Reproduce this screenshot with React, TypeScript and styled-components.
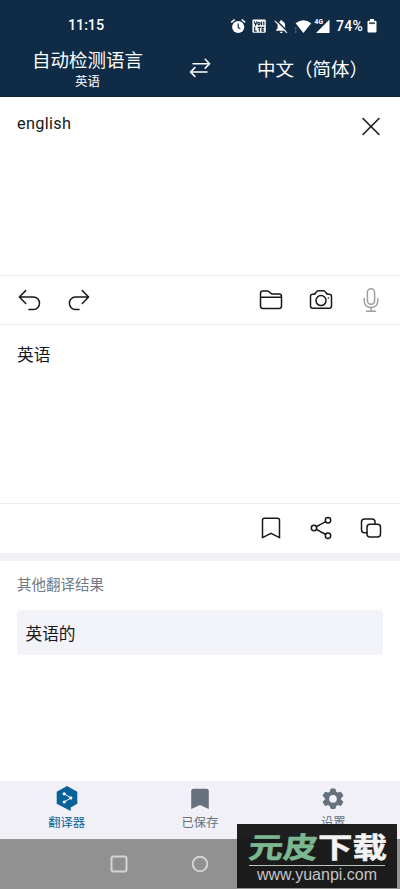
import React from 'react';
import styled, { createGlobalStyle } from 'styled-components';

const Global = createGlobalStyle`
  * { box-sizing: border-box; }
  body { margin: 0; background: #fff; }
`;

const Screen = styled.div`
  position: relative;
  width: 400px;
  height: 889px;
  display: flex;
  flex-direction: column;
  overflow: hidden;
  background: #fff;
  color: #15181c;
  font-family: Roboto, 'Noto Sans CJK SC', sans-serif;
`;

const Header = styled.header`
  height: 97px;
  flex: none;
  background: #102b46;
  color: #fff;
  border-bottom: 1px solid #0b2238;
`;

const StatusBar = styled.div`
  height: 44px;
  padding: 7px 23px 0 68px;
  display: flex;
  align-items: center;
  justify-content: space-between;
`;

const Clock = styled.span`
  font-size: 14.4px;
  font-weight: 500;
  line-height: 20px;
  letter-spacing: -0.1px;
`;

const StatusIcons = styled.div`
  display: flex;
  align-items: center;
`;

const Battery = styled.span`
  font-size: 14px;
  font-weight: 500;
  line-height: 20px;
  letter-spacing: 0.25px;
  margin: 0 4px 0 6px;
`;

const Languages = styled.div`
  display: grid;
  grid-template-columns: 175px 50px 175px;
  height: 52px;
`;

const Language = styled.button<{ $pad: number }>`
  border: 0;
  background: none;
  color: inherit;
  font: inherit;
  padding: ${(p) => p.$pad}px 0 0;
  display: flex;
  flex-direction: column;
  align-items: center;
  white-space: nowrap;
`;

const LanguageName = styled.span`
  font-size: 18.5px;
  line-height: 26px;
`;

const Detected = styled.span`
  font-size: 12.5px;
  line-height: 16px;
`;

const SwapButton = styled.div`
  display: flex;
  justify-content: center;
  padding-top: 12px;
`;

const TextPanel = styled.section`
  height: 178px;
  flex: none;
  display: flex;
  justify-content: space-between;
  align-items: flex-start;
  padding: 16px 18px 0 17px;
`;

const PanelText = styled.p<{ $cjk?: boolean }>`
  margin: ${(p) => (p.$cjk ? '4px' : '0')} 0 0;
  font-size: ${(p) => (p.$cjk ? '16.7px' : '16.3px')};
  line-height: 22px;
  letter-spacing: ${(p) => (p.$cjk ? '0' : '0.3px')};
`;

const CloseIcon = styled.svg`
  margin-top: 3px;
`;

const Toolbar = styled.div<{ $bottom?: boolean }>`
  height: 50px;
  flex: none;
  display: flex;
  align-items: center;
  gap: 26px;
  padding: ${(p) => (p.$bottom ? '0 17px' : '0 17px 1px')};
  border-top: 1px solid #eeeef0;
  border-bottom: ${(p) => (p.$bottom ? '1px solid #eeeef0' : '0')};
`;

const Spacer = styled.div`
  flex: 1;
`;

const Line = styled.svg`
  display: block;
  flex: none;
  fill: none;
  stroke: currentColor;
  stroke-width: 1.5;
  stroke-linecap: round;
  stroke-linejoin: round;
`;

const MicIcon = styled(Line)`
  color: #9b9ea2;
`;

const Divider = styled.div`
  height: 8px;
  flex: none;
  background: #f0f0f6;
`;

const Alternatives = styled.section`
  flex: 1;
  padding: 14px 17px 0;
`;

const SectionTitle = styled.h2`
  margin: 0;
  color: #717a83;
  font-size: 14.5px;
  font-weight: 400;
  line-height: 22px;
`;

const Result = styled.div`
  height: 45px;
  margin-top: 13px;
  padding: 0 8.5px;
  display: flex;
  align-items: center;
  border-radius: 4px;
  background: #f2f3f8;
  font-size: 16.7px;
`;

const Tabs = styled.nav`
  height: 58px;
  flex: none;
  display: grid;
  grid-template-columns: repeat(3, 1fr);
  background: #f0f0f6;
`;

const Tab = styled.div<{ $active?: boolean }>`
  display: flex;
  flex-direction: column;
  align-items: center;
  padding-top: 4px;
  color: ${(p) => (p.$active ? '#08629a' : '#66717d')};
  font-size: 12.3px;
  line-height: 16px;
`;

const TabIcon = styled.svg`
  display: block;
  margin-bottom: 4px;
`;

const SystemBar = styled.div`
  height: 50px;
  flex: none;
  background: #919191;
  display: flex;
  align-items: center;
  padding-left: 110px;
  gap: 63px;
`;

const Watermark = styled.div`
  position: absolute;
  left: 237px;
  top: 824px;
  width: 160px;
  height: 64px;
  display: flex;
  flex-direction: column;
  align-items: center;
  background: rgba(22, 22, 22, 0.96);
  white-space: nowrap;
`;

const Brand = styled.div`
  width: 136px;
  height: 42px;
  padding-top: 3px;
  display: flex;
  border-bottom: 1px solid #b8c4bc;
  font-family: 'Noto Sans CJK SC', sans-serif;
  font-weight: 700;
  font-size: 34.5px;
  line-height: 37px;
`;

const BrandPart = styled.span<{ $green?: boolean }>`
  color: ${(p) => (p.$green ? '#7bb891' : '#f3f3f3')};
  -webkit-text-stroke: 0.6px currentColor;
  transform: ${(p) => (p.$green ? 'skewX(-6deg) scaleY(0.84)' : 'scaleY(0.84)')};
`;

const Site = styled.div`
  color: #c5c5c5;
  font-family: 'Liberation Sans', Arial, sans-serif;
  font-size: 16px;
  line-height: 17px;
`;

function StatusGlyphs() {
  return (
    <svg width="100" height="20" viewBox="0 0 100 20" fill="#fff">
      <circle cx="8.2" cy="11" r="6.1" />
      <path d="M1.2 6.4l3.5-2.9M15.2 6.4l-3.5-2.9" stroke="#fff" strokeWidth="1.6" />
      <path d="M8.2 7.5v4l2.1 1.2" fill="none" stroke="#102b46" strokeWidth="1.2" />
      <rect x="22.4" y="3.6" width="13.4" height="13.2" rx="1.2" fill="#fff" />
      <g fill="none" stroke="#102b46" strokeWidth="1.15">
        <path d="M24.2 5.4l1.4 3.7L27 5.4M31.6 5.4v3.8M33.8 5.4v3.8" />
        <circle cx="29" cy="7.6" r="1.2" />
        <path d="M24.7 11v4.1h2M27.7 11.3h3.2M29.3 11.3v4.2M34.2 11.3h-2.1v3.8h2.1M32.2 13.2h1.8" />
      </g>
      <path d="M46.2 14.8v-1l1.4-1.4V9c0-2 1.2-3.4 2.8-3.8v-.9h1.8v.9c1.8.4 2.9 1.9 2.9 3.8v3.4l1.3 1.4v1z" />
      <path d="M49.8 15.7h3c0 1.9-3 1.9-3 0z" />
      <path d="M46 4l12 12" stroke="#102b46" strokeWidth="1.5" />
      <path d="M44.8 4.8l12.2 12" stroke="#fff" strokeWidth="1.1" />
      <path d="M65.6 7.2q7.8-5.8 15.6 0L73.4 17z" />
      <path d="M65.8 11.5v2M65.8 14.8v2" stroke="#78909f" strokeWidth=".9" />
      <path d="M99.5 3.5v13.6H86z" />
      <path d="M84 1h8v8h-8z" fill="#102b46" />
      <text x="84.6" y="7.7" fontFamily="Roboto" fontWeight="700" fontSize="6.7">4G</text>
    </svg>
  );
}

export default function App() {
  return (
    <>
      <Global />
      <Screen>
        <Header>
          <StatusBar>
            <Clock>11:15</Clock>
            <StatusIcons>
              <StatusGlyphs />
              <Battery>74%</Battery>
              <svg width="10" height="16" viewBox="0 0 10 16">
                <path d="M3 1h4v1.7h1.3q1.2 0 1.2 1.2v9.4q0 1.2-1.2 1.2H1.7q-1.2 0-1.2-1.2V3.9q0-1.2 1.2-1.2H3z" fill="#fff" />
                <path d="M2 4.3h6v1.8H2z" fill="#405466" />
              </svg>
            </StatusIcons>
          </StatusBar>
          <Languages>
            <Language $pad={4}>
              <LanguageName>自动检测语言</LanguageName>
              <Detected>英语</Detected>
            </Language>
            <SwapButton>
              <Line width="24" height="24" viewBox="0 0 24 24">
                <path d="M5 7.7h16.2M17.2 3.3l4.4 4.4-4.4 4.4M19 16H2.8M6.9 11.6L2.5 16l4.4 4.4" />
              </Line>
            </SwapButton>
            <Language $pad={13}>
              <LanguageName>中文（简体）</LanguageName>
            </Language>
          </Languages>
        </Header>

        <TextPanel>
          <PanelText>english</PanelText>
          <CloseIcon width="22" height="22" viewBox="0 0 22 22" fill="none" stroke="#24282b" strokeWidth="1.5">
            <path d="M2.6 2.1l16.8 16.8M19.4 2.1L2.6 18.9" />
          </CloseIcon>
        </TextPanel>
        <Toolbar $bottom>
          <Line width="24" height="24" viewBox="0 0 24 24">
            <path d="M8.7 2.6L2.4 9l6.3 6.5M2.8 9h13.7a6 6.3 0 0 1 0 12.6H12" />
          </Line>
          <Line width="24" height="24" viewBox="0 0 24 24">
            <path d="M15.3 2.6L21.6 9l-6.3 6.5M21.2 9H8.4a6 6.3 0 0 0 0 12.6H12" />
          </Line>
          <Spacer />
          <Line width="24" height="24" viewBox="0 0 24 24">
            <path d="M1.5 9.2V5.2q0-2.3 2.3-2.3h4.4q1.1 0 1.9.8l1.6 1.6q.7.7 1.8.7h6.6q2.4 0 2.4 2.4v9.7q0 2.4-2.4 2.4H3.9q-2.4 0-2.4-2.4V9.2h21" />
          </Line>
          <Line width="24" height="24" viewBox="0 0 24 24">
            <path d="M1.5 18V8.4q0-2.2 2.3-2.2h.8q1.3 0 2-1.2l.6-.9Q8 2.8 9.4 2.8h5q1.4 0 2.2 1.3l.6.9q.7 1.2 2 1.2h1q2.3 0 2.3 2.2V18q0 2.3-2.3 2.3H3.8Q1.5 20.3 1.5 18z" />
            <circle cx="12" cy="12.6" r="5" />
            <path d="M19.3 9.9h.1" />
          </Line>
          <MicIcon width="24" height="24" viewBox="0 0 24 24">
            <rect x="8.4" y=".8" width="7.2" height="15.4" rx="3.6" />
            <path d="M5.2 10.6v2.2c0 4 2.8 6.7 6.8 6.7s6.8-2.7 6.8-6.7v-2.2M12 19.5v3.6M7.5 23.2h9" />
          </MicIcon>
        </Toolbar>

        <TextPanel>
          <PanelText $cjk>英语</PanelText>
        </TextPanel>
        <Toolbar>
          <Spacer />
          <Line width="24" height="24" viewBox="0 0 24 24">
            <path d="M3.5 21.6V4.3q0-2 2-2h13q2 0 2 2v17.3L12 17.4z" strokeLinejoin="miter" />
          </Line>
          <Line width="24" height="24" viewBox="0 0 24 24">
            <circle cx="5" cy="12" r="2.7" />
            <circle cx="19" cy="4.3" r="2.7" />
            <circle cx="19" cy="19.8" r="2.7" />
            <path d="M7.4 10.7l9.3-5.1M7.4 13.4l9.3 5.1" />
          </Line>
          <Line width="24" height="24" viewBox="0 0 24 24">
            <rect x="8" y="8.3" width="13.5" height="12.8" rx="3" />
            <path d="M8 16.8H5.5q-3 0-3-3V6q0-3 3-3H13q3 0 3 3v2.2" />
          </Line>
        </Toolbar>
        <Divider />

        <Alternatives>
          <SectionTitle>其他翻译结果</SectionTitle>
          <Result>英语的</Result>
        </Alternatives>

        <Tabs>
          <Tab $active>
            <TabIcon width="24" height="26" viewBox="0 0 24 26">
              <path d="M12 1l10.3 5.8v12L15.7 22.6V26L1.7 18.8v-12z" fill="#08629a" />
              <path d="M9.2 8.8l6.7 4.1-6.7 4.1" fill="none" stroke="#fff" strokeWidth="1" />
              <circle cx="9.2" cy="8.8" r="1.6" fill="#fff" />
              <circle cx="15.8" cy="12.9" r="1.6" fill="#fff" />
              <circle cx="9.2" cy="17" r="1.6" fill="#fff" />
            </TabIcon>
            翻译器
          </Tab>
          <Tab>
            <TabIcon width="24" height="26" viewBox="0 0 24 26" fill="#66717d">
              <path d="M3.2 24V6q0-2.3 2.3-2.3h13q2.3 0 2.3 2.3v18L12 20z" />
            </TabIcon>
            已保存
          </Tab>
          <Tab>
            <TabIcon width="24" height="26" viewBox="0 0 24 26">
              <path
                d="M10 4h4l.8 3 2.1 1.1 3-.8 2 3.5-2.2 2.2v1.8l2.2 2.1-2 3.5-3-.8-2.1 1.2-.8 2.7h-4l-.8-2.7-2.1-1.2-3 .8-2-3.5 2.2-2.1V13l-2.2-2.2 2-3.5 3 .8L9.2 7z"
                fill="#66717d"
                stroke="#66717d"
                strokeLinejoin="round"
              />
              <circle cx="12" cy="13.9" r="3.8" fill="#f0f0f6" />
            </TabIcon>
            设置
          </Tab>
        </Tabs>
        <SystemBar>
          <svg width="18" height="18" viewBox="0 0 18 18" fill="none" stroke="#d5d5d5" strokeWidth="2">
            <rect x="1.5" y="1.5" width="15" height="15" rx="2.2" />
          </svg>
          <svg width="18" height="18" viewBox="0 0 18 18" fill="none" stroke="#d5d5d5" strokeWidth="2">
            <circle cx="9" cy="9" r="7.3" />
          </svg>
        </SystemBar>
        <Watermark>
          <Brand>
            <BrandPart $green>元皮</BrandPart>
            <BrandPart>下载</BrandPart>
          </Brand>
          <Site>www.yuanpi.com</Site>
        </Watermark>
      </Screen>
    </>
  );
}
